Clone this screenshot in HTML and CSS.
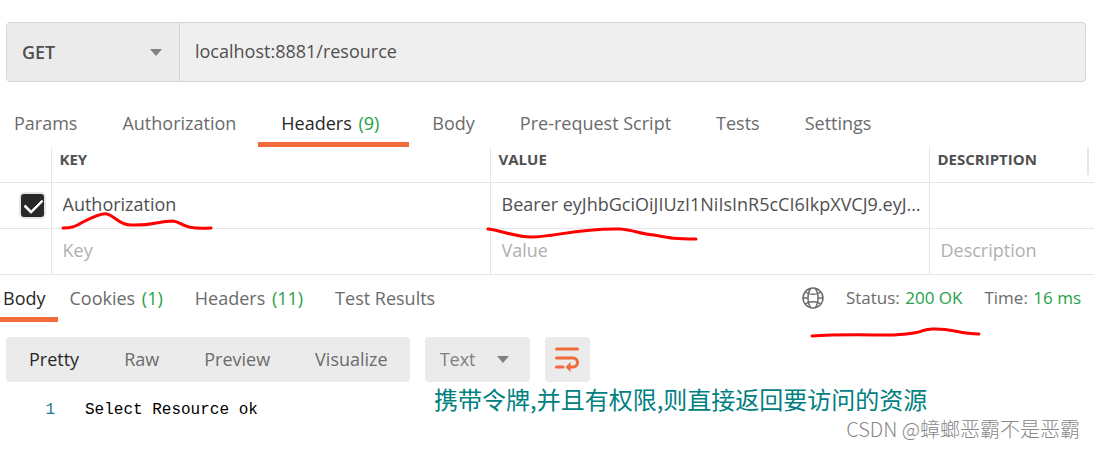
FILE: index.html
```
<!DOCTYPE html>
<html lang="en">
<head>
  <meta charset="UTF-8">
  <meta name="viewport" content="width=device-width, initial-scale=1.0">
  <title>localhost:8881/resource</title>
  <link rel="stylesheet" href="styles.css">
</head>
<body>
  <form class="url-bar">
    <div class="select method">
      <select aria-label="Method">
        <option>GET</option>
        <option>POST</option>
      </select>
    </div>
    <input class="url" type="text" aria-label="Request URL" value="localhost:8881/resource">
  </form>

  <nav class="tabs request-tabs">
    <a href="#params">Params</a>
    <a href="#auth">Authorization</a>
    <a href="#headers" class="active">Headers <span class="count">(9)</span></a>
    <a href="#body">Body</a>
    <a href="#prerequest">Pre-request Script</a>
    <a href="#tests">Tests</a>
    <a href="#settings">Settings</a>
  </nav>

  <table class="headers">
    <colgroup>
      <col class="col-check">
      <col>
      <col>
      <col class="col-desc">
    </colgroup>
    <thead>
      <tr>
        <th></th>
        <th>KEY</th>
        <th>VALUE</th>
        <th><div class="last-head">DESCRIPTION</div></th>
      </tr>
    </thead>
    <tbody>
      <tr>
        <td><input type="checkbox" aria-label="Enable header" checked></td>
        <td>
          <input type="text" aria-label="Key" value="Authorization">
          <svg class="mark mark-key" width="156" height="24" viewBox="0 0 156 24"><path d="M4 18C12 18 16 17 24 12C38 5 44 3 48 4C56 6 60 15 72 15C94 16 98 11 114 11C124 12 122 20 152 18"/></svg>
        </td>
        <td>
          <input type="text" aria-label="Value" value="Bearer eyJhbGciOiJIUzI1NiIsInR5cCI6IkpXVCJ9.eyJ…">
          <svg class="mark mark-value" width="216" height="18" viewBox="0 0 216 18"><path d="M4 5C20 7 30 13 48 13C70 13 94 4 136 5C150 6 156 10 170 11C186 14 190 15 212 15"/></svg>
        </td>
        <td><input type="text" aria-label="Description"></td>
      </tr>
      <tr>
        <td></td>
        <td><input type="text" aria-label="New key" placeholder="Key"></td>
        <td><input type="text" aria-label="New value" placeholder="Value"></td>
        <td><input type="text" aria-label="New description" placeholder="Description"></td>
      </tr>
    </tbody>
  </table>

  <section class="response-head">
    <nav class="tabs response-tabs">
      <a href="#response-body" class="active">Body</a>
      <a href="#cookies">Cookies <span class="count">(1)</span></a>
      <a href="#response-headers">Headers <span class="count">(11)</span></a>
      <a href="#results">Test Results</a>
    </nav>
    <div class="status">
      <svg class="globe" width="22" height="22" viewBox="0 0 22 22">
        <circle cx="11" cy="11" r="10"/>
        <path d="M9 1C5 6 5 16 9 21M13 1C17 6 17 16 13 21M3 5C7 8 15 8 19 5M3 17C7 14 15 14 19 17M1 11H6M16 11H21"/>
      </svg>
      <span>Status: <b>200 OK</b></span>
      <span>Time: <b>16 ms</b></span>
      <svg class="mark mark-status" width="176" height="16" viewBox="0 0 176 16"><path d="M4 11C30 9 60 10 86 10C122 8 108 5 124 4C144 3 150 9 171 9"/></svg>
    </div>
  </section>

  <div class="toolbar">
    <div class="views">
      <button class="active">Pretty</button>
      <button>Raw</button>
      <button>Preview</button>
      <button>Visualize</button>
    </div>
    <div class="select format">
      <select aria-label="Format">
        <option>Text</option>
        <option>JSON</option>
      </select>
    </div>
    <button class="wrap" aria-label="Wrap lines">
      <svg width="24" height="24" viewBox="0 0 24 24">
        <path d="M1.500 2H22.500M1.500 11H18C24 11 24 20 18 20H15M1.500 20H8"/>
        <path class="head" d="M10.500 20L15.500 15V25Z"/>
      </svg>
    </button>
  </div>

  <main class="code">
    <span class="line-number">1</span>
    <code>Select Resource ok</code>
    <p class="note" lang="zh">携带令牌,并且有权限,则直接返回要访问的资源</p>
    <p class="watermark" lang="zh">CSDN @蟑螂恶霸不是恶霸</p>
  </main>
</body>
</html>
```
FILE: styles.css
```
:root {
  --text: #505050;
  --muted: #6b6b6b;
  --orange: #f26b3a;
  --green: #26a148;
  --border: #e6e6e6;
  --panel: #ebebeb;
}

* {
  box-sizing: border-box;
}

body {
  margin: 0;
  padding-top: 22px;
  background: #fff;
  color: var(--text);
  font: 18px/24px "Open Sans", "Noto Sans CJK SC", sans-serif;
}

input,
select,
button {
  font: inherit;
  color: inherit;
  border: none;
  margin: 0;
  padding: 0;
  background: none;
}

select {
  appearance: none;
  width: 100%;
  height: 100%;
  padding-left: 15px;
}

.select {
  position: relative;
}

.select::after {
  content: "";
  position: absolute;
  top: calc(50% - 3px);
  right: 17px;
  border: 6px solid transparent;
  border-top: 7px solid #808080;
  border-bottom: none;
  pointer-events: none;
}

/* request */
.url-bar {
  display: flex;
  height: 60px;
  margin: 0 8px 0 6px;
  border: 1px solid #d4d4d4;
  border-radius: 4px;
  background: #efefef;
}

.method {
  width: 173px;
  border-right: 1px solid #d4d4d4;
  background: var(--panel);
  font-weight: 600;
}

.url {
  flex: 1;
  min-width: 0;
  padding: 0 15px 2px;
}

.tabs {
  display: flex;
  margin-left: -9px;
}

.tabs a {
  color: var(--muted);
  text-decoration: none;
  white-space: nowrap;
  border-bottom: 5px solid transparent;
}

.tabs a.active {
  color: #282828;
  border-bottom-color: var(--orange);
}

.count {
  margin: 0 8px 0 2px;
  color: var(--green);
}

.request-tabs a {
  padding: 29px 22px 7px 23px;
}

/* header table */
.headers {
  width: 100%;
  table-layout: fixed;
  border-collapse: collapse;
}

.col-check {
  width: 51px;
}

.col-desc {
  width: 165px;
}

.headers th,
.headers td {
  position: relative;
  padding: 0;
  border-bottom: 1px solid var(--border);
}

.headers th + th,
.headers td + td {
  border-left: 1px solid var(--border);
}

.headers th {
  height: 35px;
  padding-left: 8px;
  font-size: 15px;
  font-weight: 700;
  text-align: left;
  vertical-align: top;
}

.last-head {
  height: 28px;
  margin-right: 5px;
  border-right: 2px solid var(--border);
}

.headers td {
  height: 45px;
}

.headers input[type="text"] {
  display: block;
  width: 100%;
  height: 45px;
  padding: 0 8px 2px 11px;
  text-overflow: ellipsis;
}

.headers input::placeholder {
  color: #b0b0b0;
}

.headers input[type="checkbox"] {
  appearance: none;
  display: block;
  width: 27px;
  height: 27px;
  margin-left: 19px;
  border: 2px solid var(--border);
  border-radius: 5px;
  background: #282828;
}

.headers input[type="checkbox"]:checked::after {
  content: "";
  display: block;
  width: 8px;
  height: 15px;
  margin: 1px 0 0 7px;
  border: solid #fff;
  border-width: 0 3px 3px 0;
  border-radius: 1px;
  transform: rotate(45deg);
}

/* hand-drawn red underlines */
.mark {
  position: absolute;
  z-index: 1;
  fill: none;
  stroke: #f00;
  stroke-width: 3;
  stroke-linecap: round;
  pointer-events: none;
}

.mark-key {
  left: 7px;
  top: 27px;
}

.mark-value {
  left: -7px;
  top: 41px;
}

.mark-status {
  right: 97px;
  top: calc(100% + 3px);
}

/* response */
.response-head {
  display: flex;
  justify-content: space-between;
}

.response-tabs a {
  padding: 11px 12px 7px;
}

.status {
  position: relative;
  display: flex;
  align-items: center;
  gap: 22px;
  margin-right: 13px;
  font-size: 17px;
  color: var(--muted);
}

.status b {
  margin-left: 1px;
  font-weight: 400;
  color: var(--green);
}

.globe {
  fill: none;
  stroke: var(--muted);
  stroke-width: 1.500;
}

.toolbar {
  display: flex;
  gap: 15px;
  height: 45px;
  margin: 15px 6px 0;
}

.views,
.format,
.wrap {
  border-radius: 4px;
  background: var(--panel);
}

.views {
  display: flex;
}

.views button {
  padding: 0 22px 0 23px;
  color: var(--muted);
}

.views .active {
  color: #282828;
}

.format {
  width: 105px;
  color: #808080;
}

.format::after {
  right: 21px;
}

.wrap {
  width: 45px;
}

.wrap svg {
  display: block;
  margin: auto;
  overflow: visible;
  fill: none;
  stroke: var(--orange);
  stroke-width: 3;
  stroke-linecap: round;
}

.wrap .head {
  fill: var(--orange);
  stroke: none;
}

.code {
  position: relative;
  display: flex;
  padding: 16px 0 27px;
  color: #000;
}

.code code,
.line-number {
  font: 16px/24px "Liberation Mono", monospace;
}

.line-number {
  width: 55px;
  margin-right: 30px;
  text-align: right;
  color: #237893;
}

.note {
  position: absolute;
  left: 434px;
  top: 1px;
  margin: 0;
  font: 24px/32px "Noto Sans CJK SC", sans-serif;
  color: #008080;
  white-space: nowrap;
}

.watermark {
  position: absolute;
  right: 14px;
  bottom: 8px;
  margin: 0;
  font: 300 20px/24px "Noto Sans CJK SC", sans-serif;
  color: #888;
}
```
